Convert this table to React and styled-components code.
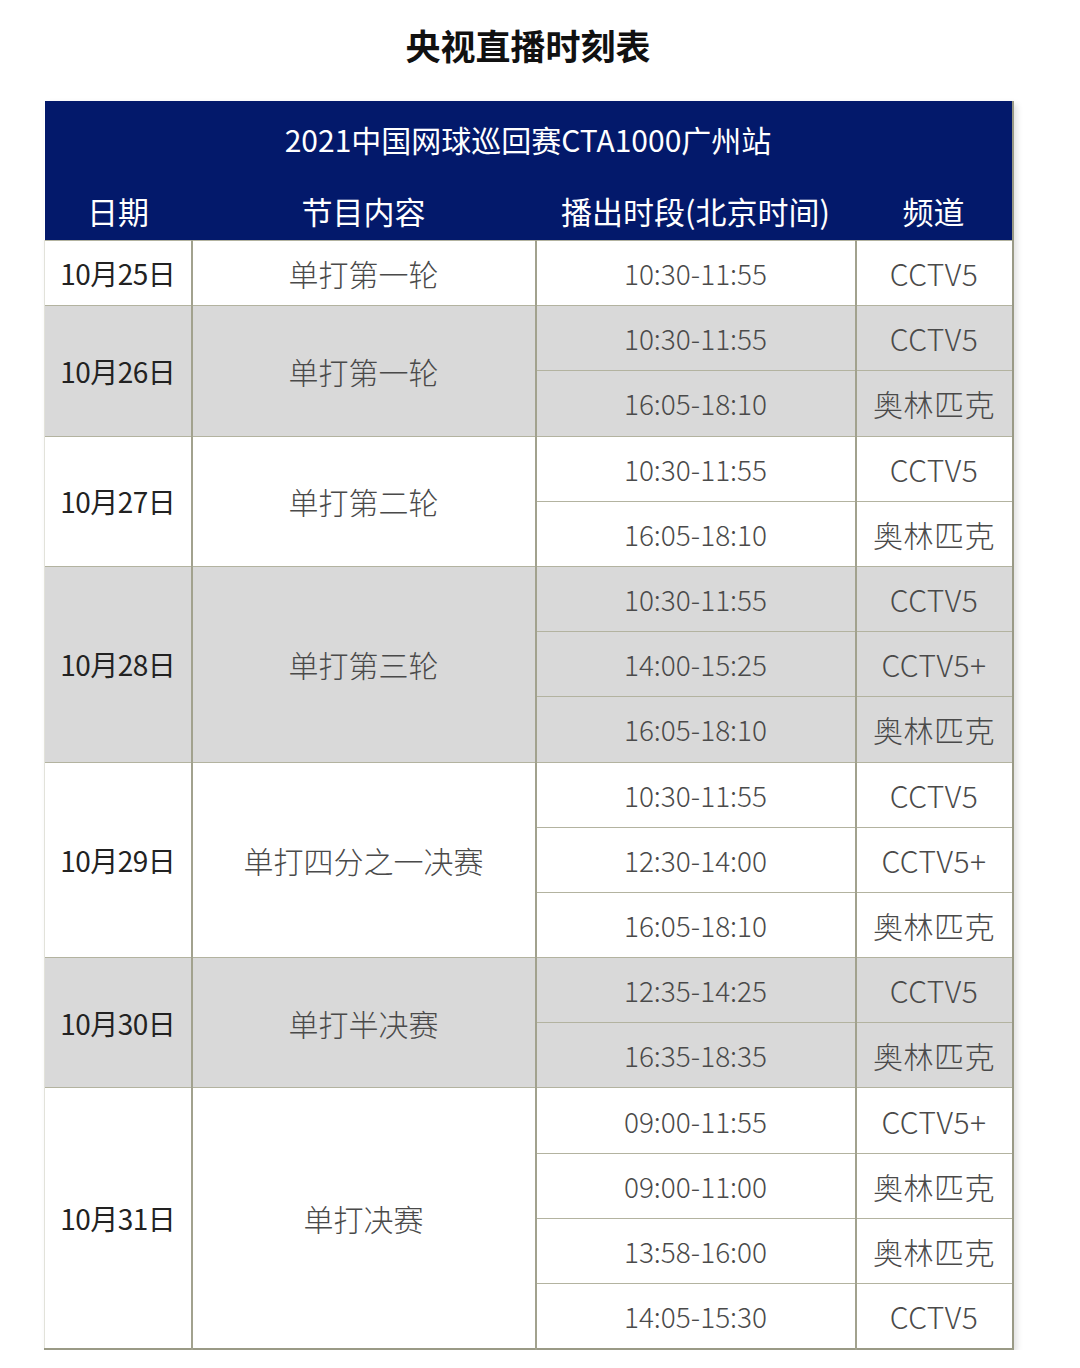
import React from 'react'
import styled, { createGlobalStyle } from 'styled-components'

const GlobalStyle = createGlobalStyle`
  body {
    margin: 0;
    background: #fff;
    font-family: "Noto Sans CJK SC", "Noto Sans", sans-serif;
  }
`

const Page = styled.div`
  width: 1080px;
  padding-top: 22px;
`

const Title = styled.h1`
  margin: 0 0 33px;
  text-align: center;
  font-size: 35px;
  line-height: 46px;
  font-weight: 700;
  color: #111;
  padding-right: 24px;
`

const Table = styled.table`
  margin-left: 44px;
  width: 968px;
  border-collapse: collapse;
  table-layout: fixed;
  box-shadow: 3px 3px 6px rgba(0, 0, 0, 0.12);
  border-right: 2px solid #9a9a86;
  border-bottom: 2px solid #9a9a86;
`

const Head = styled.thead`
  background: #03196b;
  color: #fff;
`

const BigHead = styled.th`
  height: 76px;
  padding: 0;
  font-size: 30px;
  font-weight: 400;
  text-align: center;
  vertical-align: middle;
`

const ColHead = styled.th`
  height: 59px;
  font-size: 31px;
  font-weight: 400;
  text-align: center;
  padding: 4px 0 0;
  vertical-align: middle;
`

const Row = styled.tr`
  height: 65.2px;
  background: ${p => (p.$shade ? '#d9d9d9' : '#fff')};
`

const sizes = { date: 28, show: 30, time: 28, channel: 30 }

const Cell = styled.td`
  border-top: 1px solid #b3b3a0;
  border-left: ${p => (p.$kind === 'date' ? '1px solid #e2e2da' : '2px solid #a2a28e')};
  text-align: center;
  vertical-align: middle;
  padding: 0;
  font-size: ${p => sizes[p.$kind]}px;
  font-weight: ${p => (p.$kind === 'date' ? 400 : 300)};
  color: ${p => (p.$kind === 'date' ? '#222' : '#4a4a4a')};
  letter-spacing: ${p => (p.$kind === 'date' ? '-0.5px' : p.$kind === 'channel' ? '0.5px' : '0')};
`

const schedule = [
  { date: '10月25日', show: '单打第一轮', slots: [['10:30-11:55', 'CCTV5']] },
  { date: '10月26日', show: '单打第一轮', slots: [['10:30-11:55', 'CCTV5'], ['16:05-18:10', '奥林匹克']] },
  { date: '10月27日', show: '单打第二轮', slots: [['10:30-11:55', 'CCTV5'], ['16:05-18:10', '奥林匹克']] },
  {
    date: '10月28日',
    show: '单打第三轮',
    slots: [['10:30-11:55', 'CCTV5'], ['14:00-15:25', 'CCTV5+'], ['16:05-18:10', '奥林匹克']],
  },
  {
    date: '10月29日',
    show: '单打四分之一决赛',
    slots: [['10:30-11:55', 'CCTV5'], ['12:30-14:00', 'CCTV5+'], ['16:05-18:10', '奥林匹克']],
  },
  { date: '10月30日', show: '单打半决赛', slots: [['12:35-14:25', 'CCTV5'], ['16:35-18:35', '奥林匹克']] },
  {
    date: '10月31日',
    show: '单打决赛',
    slots: [
      ['09:00-11:55', 'CCTV5+'],
      ['09:00-11:00', '奥林匹克'],
      ['13:58-16:00', '奥林匹克'],
      ['14:05-15:30', 'CCTV5'],
    ],
  },
]

export default function App() {
  return (
    <Page>
      <GlobalStyle />
      <Title>央视直播时刻表</Title>
      <Table>
        <colgroup>
          <col style={{ width: 147 }} />
          <col style={{ width: 344 }} />
          <col style={{ width: 320 }} />
          <col style={{ width: 157 }} />
        </colgroup>
        <Head>
          <tr>
            <BigHead colSpan={4}>2021中国网球巡回赛CTA1000广州站</BigHead>
          </tr>
          <tr>
            <ColHead>日期</ColHead>
            <ColHead>节目内容</ColHead>
            <ColHead>播出时段(北京时间)</ColHead>
            <ColHead>频道</ColHead>
          </tr>
        </Head>
        <tbody>
          {schedule.map((day, i) =>
            day.slots.map(([time, channel], j) => (
              <Row key={day.date + j} $shade={i % 2 === 1}>
                {j === 0 && (
                  <>
                    <Cell $kind="date" rowSpan={day.slots.length}>
                      {day.date}
                    </Cell>
                    <Cell $kind="show" rowSpan={day.slots.length}>
                      {day.show}
                    </Cell>
                  </>
                )}
                <Cell $kind="time">{time}</Cell>
                <Cell $kind="channel">{channel}</Cell>
              </Row>
            ))
          )}
        </tbody>
      </Table>
    </Page>
  )
}
